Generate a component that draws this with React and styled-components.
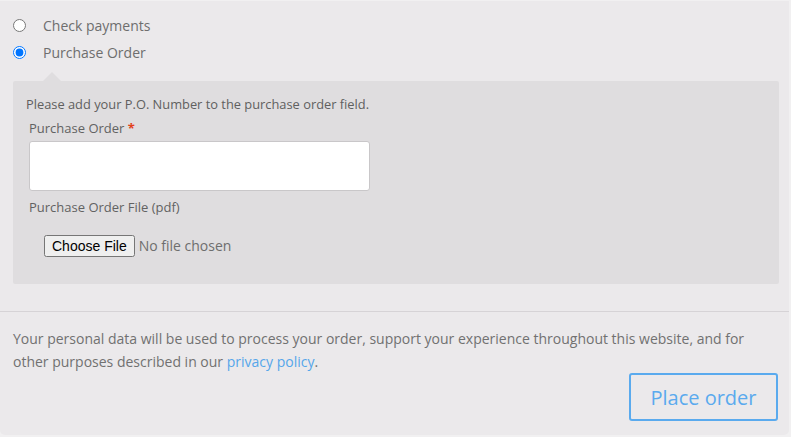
import React from "react";
import styled, { createGlobalStyle } from "styled-components";

const Global = createGlobalStyle`
  html, body { margin: 0; padding: 0; background: #f1f0f1; }
  body { font-family: "Open Sans", "Liberation Sans", sans-serif; }
  * { box-sizing: border-box; }
`;

const Payment = styled.div`
  width: 789px;
  height: 434px;
  margin-top: 1px;
  background: #ebe9eb;
  border-radius: 0 0 5px 5px;
  display: flex;
  flex-direction: column;
`;

const Methods = styled.ul`
  list-style: none;
  margin: 0;
  padding: 11px 10px 27px 13px;
  border-bottom: 1px solid #d6d3d6;
`;

const Method = styled.li`
  margin: 0;
`;

const MethodRow = styled.label`
  display: flex;
  align-items: center;
  height: 27px;
  gap: 17px;
  font-size: 14px;
  color: #6e6e6e;
  cursor: pointer;
`;

const Radio = styled.input.attrs({ type: "radio", name: "pm" })`
  margin: 0;
  width: 13px;
  height: 13px;
`;

const Box = styled.div`
  position: relative;
  margin-top: 15px;
  height: 203px;
  background: #dfdddf;
  border-radius: 2px;
  padding: 13px;
  color: #606060;
  font-size: 12.85px;

  &::before {
    content: "";
    position: absolute;
    top: -18px;
    left: 30px;
    border: 9px solid transparent;
    border-bottom-color: #dfdddf;
  }
`;

const Note = styled.p`
  margin: 0 0 1px;
  line-height: 20px;
`;

const Row = styled.div`
  padding: 3px;
`;

const Label = styled.label`
  display: block;
  line-height: 20px;
  font-size: 13px;
  color: #626262;
`;

const Req = styled.span`
  color: #e2401c;
  font-weight: 700;
`;

const TextInput = styled.input`
  display: block;
  margin-top: 3px;
  width: 341px;
  height: 50px;
  background: #fff;
  border: 1px solid #c9c7c9;
  border-radius: 3px;
  outline: none;
`;

const FileWrap = styled.div`
  padding: 18px 0 0 15px;
`;

const FileInput = styled.input.attrs({ type: "file" })`
  font-family: "Open Sans", "Liberation Sans", sans-serif;
  font-size: 14px;
  color: #6e6e6e;

  &::file-selector-button {
    font-family: "Liberation Sans", Arial, sans-serif;
    font-size: 14px;
    margin-right: 4px;
  }
`;

const Footer = styled.div`
  padding: 15px 11px 14px 13px;
  display: flex;
  flex-direction: column;
`;

const Privacy = styled.p`
  margin: 0;
  font-size: 14px;
  line-height: 23px;
  color: #717171;
`;

const Link = styled.a`
  color: #55a6ea;
  text-decoration: none;
`;

const PlaceOrder = styled.button`
  align-self: flex-end;
  margin-top: 0;
  width: 149px;
  height: 48px;
  background: transparent;
  border: 2px solid #5aaaee;
  border-radius: 3px;
  color: #5aaaee;
  font-family: "Open Sans", "Liberation Sans", sans-serif;
  font-size: 20px;
  cursor: pointer;
`;

export default function App() {
  return (
    <>
      <Global />
      <Payment>
        <Methods>
          <Method>
            <MethodRow>
              <Radio />
              Check payments
            </MethodRow>
          </Method>
          <Method>
            <MethodRow>
              <Radio defaultChecked />
              Purchase Order
            </MethodRow>
            <Box>
              <Note>Please add your P.O. Number to the purchase order field.</Note>
              <Row>
                <Label htmlFor="po">
                  Purchase Order <Req>*</Req>
                </Label>
                <TextInput id="po" type="text" />
              </Row>
              <Row>
                <Label>Purchase Order File (pdf)</Label>
                <FileWrap>
                  <FileInput />
                </FileWrap>
              </Row>
            </Box>
          </Method>
        </Methods>
        <Footer>
          <Privacy>
            Your personal data will be used to process your order, support your experience throughout this website, and for other purposes described in our <Link href="#">privacy policy</Link>.
          </Privacy>
          <PlaceOrder>Place order</PlaceOrder>
        </Footer>
      </Payment>
    </>
  );
}
